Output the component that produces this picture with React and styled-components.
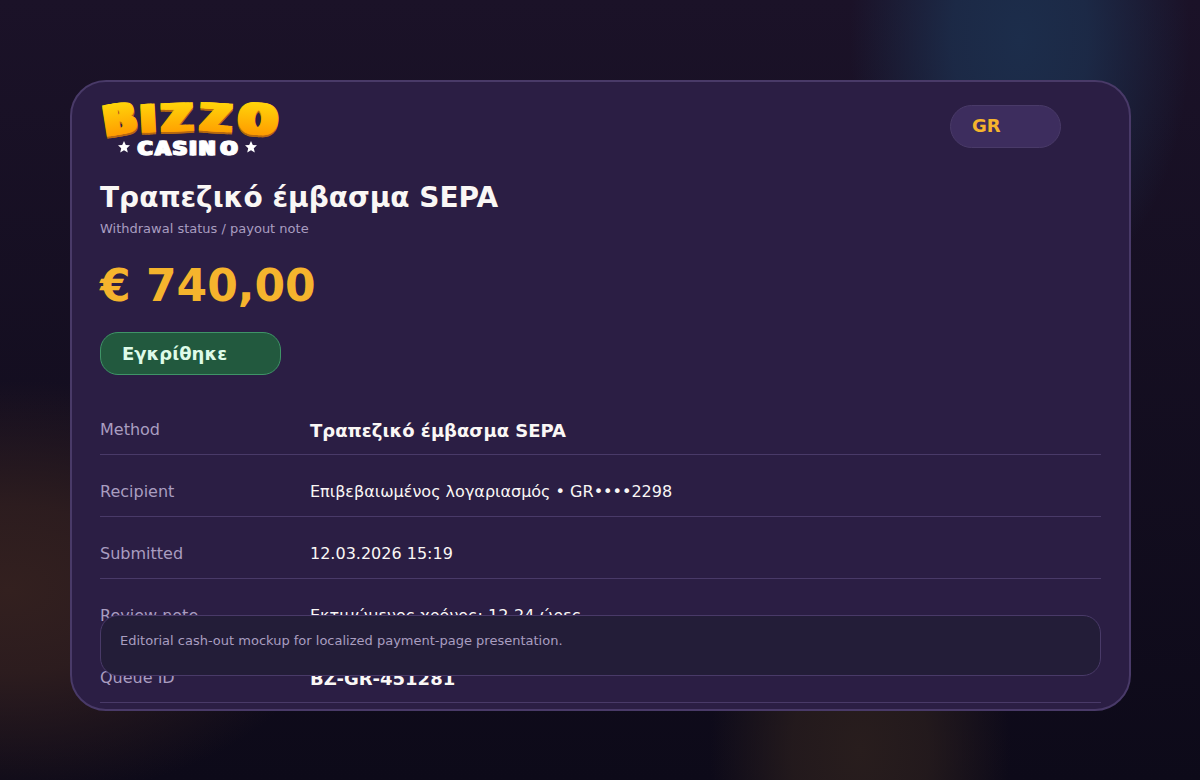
import React from 'react';
import styled, { createGlobalStyle, ThemeProvider } from 'styled-components';

const theme = {
  font: '"DejaVu Sans", Verdana, sans-serif',
  palette: {
    card: '#2b1e44',
    border: '#493a68',
    note: '#231d38',
    pill: '#3d2d5e',
    white: '#faf7f5',
    muted: '#a99dc0',
    gold: '#f5b42d',
    green: '#22593e',
    greenBorder: '#3f9467',
    greenText: '#defbe8',
  },
};

const GlobalStyle = createGlobalStyle`
  * {
    box-sizing: border-box;
  }
  body {
    margin: 0;
    background-color: #0e0a1a;
  }
`;

const Page = styled.main`
  min-height: 100vh;
  padding: 80px 69px 69px 70px;
  font-family: ${props => props.theme.font};
  color: ${props => props.theme.palette.white};
  background:
    radial-gradient(ellipse 170px 270px at 1020px 40px, #1c2d4b 0%, #1c2d4bd9 40%, #1c2d4b00 100%),
    radial-gradient(ellipse 330px 210px at 10px 590px, #33201f 0%, #33201fcc 40%, #33201f00 100%),
    radial-gradient(ellipse 150px 240px at 860px 750px, #281d1d 0%, #281d1dcc 45%, #281d1d00 100%),
    linear-gradient(#1b1228, #0d0a19);
`;

const Card = styled.article`
  position: relative;
  padding: 18px 28px 6px;
  border: 2px solid ${props => props.theme.palette.border};
  border-radius: 36px;
  background-color: ${props => props.theme.palette.card};
`;

const Header = styled.header`
  display: flex;
  justify-content: space-between;
  align-items: flex-start;
  padding-right: 40px;
  margin-bottom: 22px;
`;

const Pill = styled.div`
  display: flex;
  align-items: center;
  width: ${props => props.$width};
  height: 43px;
  padding: 0 21px;
  border: 1px solid ${props => props.$border};
  border-radius: ${props => props.$radius};
  font-size: 18px;
  font-weight: bold;
  color: ${props => props.$color};
  background-color: ${props => props.$background};
`;

const LocalePill = styled(Pill)`
  margin-top: 5px;
  padding-bottom: 2px;
`;

const Title = styled.h1`
  margin: 0;
  font-size: 28px;
  line-height: 32px;
`;

const Subtitle = styled.p`
  margin: 7px 0 21px;
  font-size: 13px;
  line-height: 16px;
  color: ${props => props.theme.palette.muted};
`;

const Amount = styled.p`
  margin: 0 0 18px;
  font-size: 44px;
  font-weight: bold;
  line-height: 56px;
  color: ${props => props.theme.palette.gold};
`;

const Details = styled.dl`
  margin: 18px 0 0;
`;

const Row = styled.div`
  display: grid;
  grid-template-columns: 210px 1fr;
  align-items: center;
  height: 62px;
  padding-top: 12px;
  border-bottom: 1px solid ${props => props.theme.palette.border};
`;

const Label = styled.dt`
  font-size: 16px;
  line-height: 20px;
  color: ${props => props.theme.palette.muted};
`;

const Value = styled.dd`
  margin: 0;
  font-size: ${props => (props.$strong ? '18px' : '16px')};
  font-weight: ${props => (props.$strong ? 'bold' : 'normal')};
  line-height: ${props => (props.$strong ? '22px' : '20px')};
  padding-top: ${props => (props.$strong ? '2px' : '0')};
`;

const Note = styled.aside`
  position: absolute;
  right: 28px;
  bottom: 33px;
  left: 28px;
  height: 61px;
  padding: 17px 19px;
  border: 1px solid ${props => props.theme.palette.border};
  border-radius: 18px;
  font-size: 13px;
  line-height: 16px;
  color: ${props => props.theme.palette.muted};
  background-color: ${props => props.theme.palette.note};
`;

const LogoSvg = styled.svg`
  display: block;
  overflow: visible;
  font-family: ${props => props.theme.font};
  font-weight: bold;
  text-anchor: middle;
  stroke-linejoin: miter;
`;

// spread: how far the left and right copies of a letter sit from its centre
const LETTERS = [
  { char: 'B', x: 20, y: 34, size: 42, angle: -9, spread: 3 },
  { char: 'I', x: 48, y: 32, size: 38, angle: -3, spread: 3 },
  { char: 'Z', x: 77, y: 31, size: 38, angle: -2, spread: 4 },
  { char: 'Z', x: 116, y: 31, size: 38, angle: 3, spread: 4 },
  { char: 'O', x: 158, y: 34, size: 42, angle: 4, spread: 4 },
];

const STAR = 'M0 -6 1.8 -2 6 -1.7 2.8 1.2 3.8 5.5 0 3.2 -3.8 5.5 -2.8 1.2 -6 -1.7 -1.8 -2Z';

const Wordmark = ({ dy = 0, color }) => (
  <g fill={color} stroke={color} strokeWidth="1">
    {LETTERS.map(({ char, x, y, size, angle, spread }) => (
      <text
        key={x}
        y={y + dy}
        fontSize={size}
        transform={`rotate(${angle} ${x} ${y - 14})`}
        aria-hidden="true"
      >
        {[-spread, 0, spread].map(dx => (
          <tspan key={dx} x={x + dx} y={y + dy}>
            {char}
          </tspan>
        ))}
      </text>
    ))}
  </g>
);

const Logo = () => (
  <LogoSvg width="180" height="60" viewBox="0 0 180 60" role="img" aria-label="Bizzo Casino">
    <defs>
      <linearGradient id="gold" gradientUnits="userSpaceOnUse" x1="0" y1="2" x2="0" y2="34">
        <stop offset="0" stopColor="#ffd60a" />
        <stop offset="1" stopColor="#ff9d00" />
      </linearGradient>
    </defs>
    <Wordmark dy={2} color="#b8690f" />
    <Wordmark color="url(#gold)" />
    <g fill="#fff" stroke="#fff" fontSize="20" strokeWidth="1">
      <text x="44 62 79 92 106 128" y="55">
        CASINO
      </text>
      <text x="46 64 81 94 108 130" y="55" aria-hidden="true">
        CASINO
      </text>
    </g>
    <path d={STAR} fill="#fff" transform="translate(24 47)" />
    <path d={STAR} fill="#fff" transform="translate(151 47)" />
  </LogoSvg>
);

const DETAILS = [
  { label: 'Method', value: 'Τραπεζικό έμβασμα SEPA', strong: true },
  { label: 'Recipient', value: 'Επιβεβαιωμένος λογαριασμός • GR••••2298' },
  { label: 'Submitted', value: '12.03.2026 15:19' },
  { label: 'Review note', value: 'Εκτιμώμενος χρόνος: 12-24 ώρες' },
  { label: 'Queue ID', value: 'BZ-GR-451281', strong: true },
];

const { palette } = theme;

const App = () => (
  <ThemeProvider theme={theme}>
    <GlobalStyle />
    <Page>
      <Card>
        <Header>
          <Logo />
          <LocalePill
            $width="111px"
            $radius="22px"
            $color={palette.gold}
            $background={palette.pill}
            $border={palette.border}
          >
            GR
          </LocalePill>
        </Header>
        <Title>Τραπεζικό έμβασμα SEPA</Title>
        <Subtitle>Withdrawal status / payout note</Subtitle>
        <Amount>€ 740,00</Amount>
        <Pill
          $width="181px"
          $radius="18px"
          $color={palette.greenText}
          $background={palette.green}
          $border={palette.greenBorder}
        >
          Εγκρίθηκε
        </Pill>
        <Details>
          {DETAILS.map(({ label, value, strong }) => (
            <Row key={label}>
              <Label>{label}</Label>
              <Value $strong={strong}>{value}</Value>
            </Row>
          ))}
        </Details>
        <Note>Editorial cash-out mockup for localized payment-page presentation.</Note>
      </Card>
    </Page>
  </ThemeProvider>
);

export default App;
